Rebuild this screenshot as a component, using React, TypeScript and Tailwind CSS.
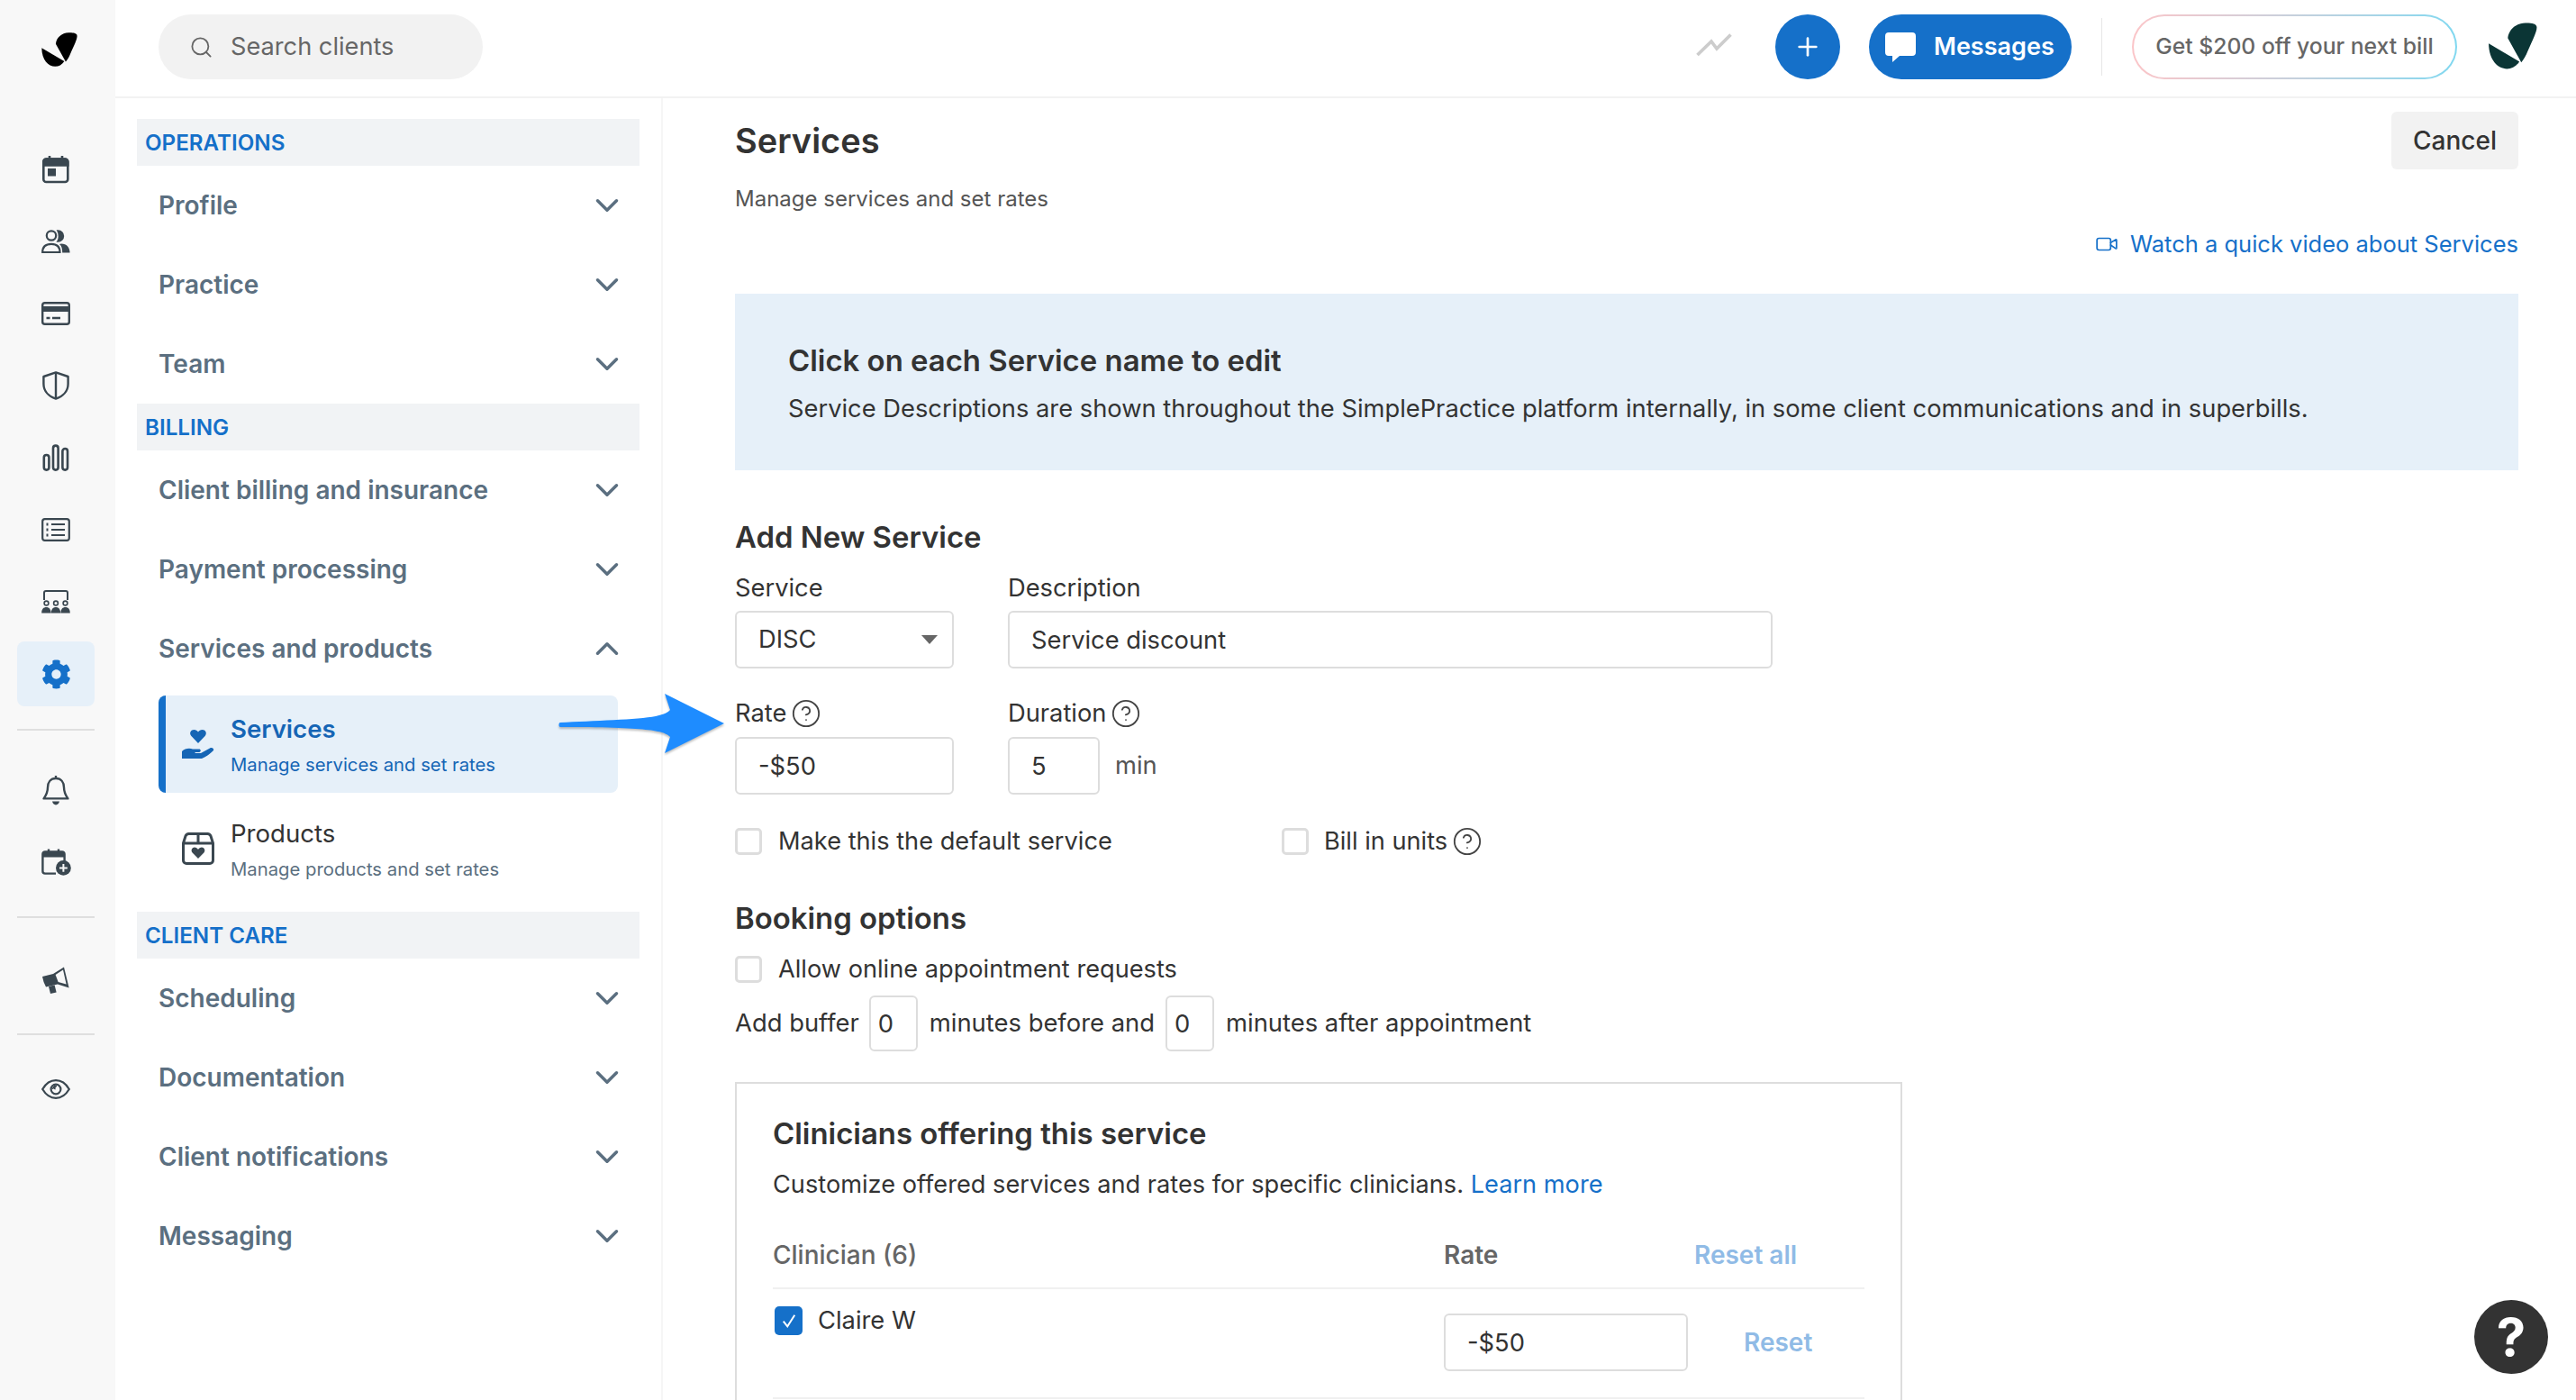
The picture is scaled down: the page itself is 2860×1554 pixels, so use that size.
import { ReactNode } from "react";
import { ChevronDown, ChevronUp, CircleHelp, Plus, Search, Video } from "lucide-react";
import { FaCog } from "react-icons/fa";

const Logo = ({ className }: { className: string }) => (
  <svg viewBox="0 0 42 40" className={className} fill="currentColor">
    <path d="M16.3 13 C17 6 23 .4 31 .3 C36 .2 40.5 .6 40.6 4 C40.6 8 37 15 33 24 C31.5 28 29.5 31 27.6 33.4 Z" />
    <path d="M.3 17.6 L26 32.8 C23.4 36.8 19.6 38.8 15.6 38.8 C7.6 38.8 .4 31 .3 17.6 Z" />
  </svg>
);

// rail icons, drawn by hand so the strokes match
const railIcons: ReactNode[] = [
  <svg key="cal" viewBox="0 0 32 32" className="h-[32px] w-[32px]" fill="none" stroke="#3a4750" strokeWidth="2.6">
    <rect x="2.3" y="4.5" width="27" height="25.5" rx="3" />
    <path d="M2.3 8 a3 3 0 0 1 3-3.5 h21 a3 3 0 0 1 3 3.5 v3.5 h-27 z" fill="#3a4750" />
    <path d="M9 1v4M23 1v4" />
    <rect x="7" y="15" width="9" height="8.5" fill="#3a4750" stroke="none" />
  </svg>,
  <svg key="people" viewBox="0 0 32 26" className="h-[26px] w-[32px]" fill="none" stroke="#3a4750" strokeWidth="2.2">
    <circle cx="11" cy="6.5" r="5.2" />
    <path d="M1.2 25 C1.2 19 5 15.8 11 15.8 C17 15.8 20.5 19 20.5 25 Z" />
    <path d="M18.5 1.4 A5.6 5.6 0 0 1 18.5 12.6 C20.2 10 20.2 4.4 18.5 1.4 Z" fill="#3a4750" />
    <path d="M22 15.4 C28 15.4 31.4 19.4 31.6 25.6 H23.2 C23.2 21.6 22.6 18 20 16 Z" fill="#3a4750" stroke="none" />
  </svg>,
  <svg key="card" viewBox="0 0 32 26" className="h-[26px] w-[32px]" fill="none" stroke="#3a4750" strokeWidth="2.4">
    <rect x="1.2" y="1.2" width="29.6" height="23.6" rx="2.6" />
    <rect x="1.2" y="5" width="29.6" height="6" fill="#3a4750" stroke="none" />
    <path d="M5.5 18h4M12 18h9" />
  </svg>,
  <svg key="shield" viewBox="0 0 30 32" className="h-[32px] w-[30px]" fill="none" stroke="#3a4750" strokeWidth="2.4">
    <path d="M15 1.4 L28.6 6 V14 C28.6 22 23 28 15 30.6 C7 28 1.4 22 1.4 14 V6 Z" strokeLinejoin="round" />
    <path d="M15 1.4V30.6" />
  </svg>,
  <svg key="chart" viewBox="0 0 30 30" className="h-[30px] w-[30px]" fill="none" stroke="#3a4750" strokeWidth="2.6">
    <rect x="1.8" y="12" width="5.6" height="16.6" rx="2.8" />
    <rect x="12" y="1.6" width="5.6" height="27" rx="2.8" />
    <rect x="22.4" y="5" width="5.6" height="23.6" rx="2.8" />
  </svg>,
  <svg key="list" viewBox="0 0 32 26" className="h-[26px] w-[32px]" fill="none" stroke="#3a4750" strokeWidth="2.2">
    <rect x="1.2" y="1.2" width="29.6" height="23.6" rx="2.6" />
    <path d="M11 7h15M11 13h15M11 19h15" />
    <path d="M5.5 7h2M5.5 13h2M5.5 19h2" strokeWidth="2.8" />
  </svg>,
  <svg key="meeting" viewBox="0 0 32 26" className="h-[26px] w-[32px]" fill="none" stroke="#3a4750" strokeWidth="2">
    <path d="M3 11 V3 a2 2 0 0 1 2-2 h22 a2 2 0 0 1 2 2 V11" />
    <circle cx="5.5" cy="14.5" r="2.4" strokeWidth="1.6" />
    <circle cx="16" cy="14.5" r="2.4" strokeWidth="1.6" />
    <circle cx="26.5" cy="14.5" r="2.4" strokeWidth="1.6" />
    <path d="M.2 25.4 C.2 21 2.4 19 5.4 19 C8.4 19 10.4 21 10.6 25.4 Z M10.8 25.4 C11 21 13 19 16 19 C19 19 21 21 21.2 25.4 Z M21.4 25.4 C21.6 21 23.6 19 26.6 19 C29.6 19 31.8 21 31.8 25.4 Z" fill="#3a4750" stroke="none" />
  </svg>,
];

const Bell = () => (
  <svg viewBox="0 0 30 34" className="h-[34px] w-[30px]" fill="none" stroke="#3a4750" strokeWidth="2.4">
    <path d="M15 4 C9 4 6 8.5 6 14 C6 20 4 23 1.6 26.4 H28.4 C26 23 24 20 24 14 C24 8.5 21 4 15 4 Z M15 1v3" strokeLinejoin="round" />
    <path d="M11 29.6 H19 C18.6 32 17 33.4 15 33.4 C13 33.4 11.4 32 11 29.6 Z" fill="#3a4750" stroke="none" />
  </svg>
);

const CalendarPlus = () => (
  <svg viewBox="0 0 33 30" className="h-[30px] w-[33px]" fill="none" stroke="#3a4750" strokeWidth="2.4">
    <path d="M16 27.6 H4 a2.6 2.6 0 0 1-2.6-2.6 V6 a2.6 2.6 0 0 1 2.6-2.6 H23 a2.6 2.6 0 0 1 2.6 2.6 V14" />
    <path d="M1.4 6 a2.6 2.6 0 0 1 2.6-2.6 H23 a2.6 2.6 0 0 1 2.6 2.6 V9.6 H1.4 Z" fill="#3a4750" stroke="none" />
    <path d="M8 .4v4M19 .4v4" />
    <circle cx="24.4" cy="21.4" r="8.4" fill="#3a4750" stroke="none" />
    <path d="M24.4 17v8.8M20 21.4h8.8" stroke="#f8f8f8" strokeWidth="2" />
  </svg>
);

const Megaphone = () => (
  <svg viewBox="0 0 32 33" className="h-[33px] w-[32px]" fill="none" stroke="#3a4750" strokeWidth="2.4">
    <path d="M1 13 L13 10 L25 2.4 L30.6 25.4 L18 21.6 L5 24.6 Q2 19 1 13 Z" fill="#3a4750" stroke="none" />
    <path d="M15.6 11 L24 5.6 L27.6 21.6 L18.6 19 Z" fill="#f8f8f8" stroke="none" />
    <path d="M8 24 L10 32 L16.6 30.6 L14.6 22.4 Z" fill="#3a4750" stroke="none" />
  </svg>
);

const Eye = () => (
  <svg viewBox="0 0 32 22" className="h-[22px] w-[32px]" fill="none" stroke="#3a4750" strokeWidth="2.2">
    <path d="M1.2 11 C5 4.6 10 1.2 16 1.2 C22 1.2 27 4.6 30.8 11 C27 17.4 22 20.8 16 20.8 C10 20.8 5 17.4 1.2 11 Z" />
    <circle cx="16" cy="11" r="5.4" />
    <path d="M16 7.6 A3.4 3.4 0 0 0 12.6 11 A3.4 3.4 0 0 1 16 7.6 Z M13 9 a3 3 0 0 1 4 -1.4 a3 3 0 0 0 -2 3.6 z" fill="#3a4750" stroke="#3a4750" strokeWidth="1" />
  </svg>
);

const RailDivider = () => <div className="h-[2px] w-[86px] bg-[#dfdfdf]" />;

function Rail() {
  return (
    <aside className="flex w-[128px] shrink-0 flex-col items-center bg-[#f8f8f8] pr-[4px]">
      <div className="flex h-[148px] w-full items-start justify-center pt-[36px] pl-[8px]">
        <Logo className="h-[39px] w-[41px] text-black" />
      </div>
      {railIcons.map((icon, i) => (
        <div key={i} className="flex h-[80px] w-full items-center justify-center">
          {icon}
        </div>
      ))}
      <div className="mt-[4px] flex h-[72px] w-[86px] shrink-0 items-center justify-center rounded-[8px] bg-[#e6f0f9] text-[#1570c9]">
        <FaCog className="h-[33px] w-[33px]" />
      </div>
      <div className="mt-[25px]">
        <RailDivider />
      </div>
      <div className="mt-[31px] flex h-[70px] items-center">
        <Bell />
      </div>
      <div className="mt-[10px] flex h-[70px] items-center">
        <CalendarPlus />
      </div>
      <div className="mt-[25px]">
        <RailDivider />
      </div>
      <div className="mt-[50px] flex h-[36px] items-center">
        <Megaphone />
      </div>
      <div className="mt-[42px]">
        <RailDivider />
      </div>
      <div className="mt-[44px] flex h-[32px] items-center">
        <Eye />
      </div>
    </aside>
  );
}

function TopBar() {
  return (
    <header className="flex h-[109px] shrink-0 items-start border-b-2 border-[#f2f2f2] pt-[16px] pl-[48px]">
      <div className="flex h-[72px] w-[360px] items-center rounded-full bg-[#f2f2f2] pl-[34px] text-[#666666]">
        <Search className="h-[27px] w-[27px]" strokeWidth={1.6} />
        <span className="ml-[19px] text-[27.2px]">Search clients</span>
      </div>
      <svg viewBox="0 0 40 26" className="mt-[21px] ml-[1347px] h-[26px] w-[40px]" fill="none" stroke="#cccccc" strokeWidth="3.6">
        <path d="M1.5 24 L17 9 L23 17 L38.5 1.5" />
      </svg>
      <button className="ml-[48px] flex h-[72px] w-[72px] items-center justify-center rounded-full bg-[#1570c9] text-white">
        <Plus className="h-[32px] w-[32px]" strokeWidth={2} />
      </button>
      <button className="ml-[32px] flex h-[72px] w-[225px] items-center rounded-full bg-[#1570c9] pl-[18px] text-white">
        <svg viewBox="0 0 34 33" className="h-[33px] w-[34px]" fill="currentColor">
          <path d="M4 0 H30 a4 4 0 0 1 4 4 V22 a4 4 0 0 1-4 4 H16 L8 33 V26 H4 a4 4 0 0 1-4-4 V4 a4 4 0 0 1 4-4 Z" />
        </svg>
        <span className="ml-[20px] text-[27px] font-semibold">Messages</span>
      </button>
      <div className="mt-[4px] ml-[33px] h-[64px] w-[1px] bg-[#e6e6e6]" />
      <div className="ml-[33px] h-[72px] w-[361px] rounded-full bg-gradient-to-r from-[#fbc5c8] to-[#80d8f0] p-[2px]">
        <div className="flex h-full w-full items-center justify-center rounded-full bg-white text-[24.7px] font-medium text-[#666666]">
          Get $200 off your next bill
        </div>
      </div>
      <Logo className="mt-[9px] ml-[34px] h-[53px] w-[57px] text-[#0b3535]" />
    </header>
  );
}

const SectionHeader = ({ title }: { title: string }) => (
  <div className="flex h-[52px] items-center bg-[#f1f3f5] pt-[2px] pl-[9px] text-[24.2px] font-semibold text-[#1570c9]">
    {title}
  </div>
);

const NavRow = ({ title, open }: { title: string; open?: boolean }) => (
  <div className="flex h-[88px] items-center justify-between pr-[15px] pl-[24px] text-[28px] font-semibold text-[#5b6f80]">
    <span>{title}</span>
    {open ? (
      <ChevronUp className="h-[42px] w-[42px]" strokeWidth={2} />
    ) : (
      <ChevronDown className="h-[42px] w-[42px]" strokeWidth={2} />
    )}
  </div>
);

function Sidebar() {
  return (
    <nav className="w-[608px] shrink-0 border-r-2 border-[#f6f6f6] pt-[23px] pr-[24px] pl-[24px]">
      <div className="w-[558px]">
        <SectionHeader title="OPERATIONS" />
        <NavRow title="Profile" />
        <NavRow title="Practice" />
        <NavRow title="Team" />
        <SectionHeader title="BILLING" />
        <NavRow title="Client billing and insurance" />
        <NavRow title="Payment processing" />
        <NavRow title="Services and products" open />
        <div className="mt-[8px] ml-[24px] flex h-[108px] w-[510px] items-center rounded-[8px] border-l-[8px] border-[#1570c9] bg-[#e6f0f9] pl-[18px] text-[#1565b5]">
          <svg viewBox="0 0 36 32" className="h-[32px] w-[36px] shrink-0" fill="currentColor">
            <path d="M18 15 L10.4 7 C7.6 3.6 10 0 13.4 0 C15.4 0 17 1 18 2.6 C19 1 20.6 0 22.6 0 C26 0 28.4 3.6 25.6 7 Z" />
            <path d="M0 24 C3 21 8 20 12 21.6 H19 C21 21.6 21.6 24.4 19.4 25 H14.6 V26 H21 L31 20.4 C33.6 19 36 21.4 35 23 C31 27 27 30 22 32 H0 Z" />
          </svg>
          <div className="mt-[4px] ml-[18px]">
            <div className="text-[27.6px] leading-[38px] font-semibold">Services</div>
            <div className="mt-[4px] text-[20.3px] leading-[34px]">Manage services and set rates</div>
          </div>
        </div>
        <div className="mt-[8px] ml-[24px] flex h-[108px] w-[510px] items-center border-l-[8px] border-transparent pl-[18px]">
          <svg viewBox="0 0 36 36" className="h-[36px] w-[36px] shrink-0" fill="none" stroke="#3a4750" strokeWidth="3">
            <path d="M1.5 12 L4 4 a4 4 0 0 1 3.6-2.5 H28.4 a4 4 0 0 1 3.6 2.5 L34.5 12 V31 a3.5 3.5 0 0 1-3.5 3.5 H5 a3.5 3.5 0 0 1-3.5-3.5 Z" />
            <path d="M1.5 12 H34.5 M18 1.5 V12" />
            <path d="M18 29 L11.6 22.6 C9.4 19.8 11.4 16.6 14 16.6 C15.6 16.6 17.2 17.6 18 19 C18.8 17.6 20.4 16.6 22 16.6 C24.6 16.6 26.6 19.8 24.4 22.6 Z" fill="#3a4750" stroke="none" />
          </svg>
          <div className="mt-[4px] ml-[18px]">
            <div className="text-[27.6px] leading-[38px] text-[#333333]">Products</div>
            <div className="mt-[4px] text-[20.3px] leading-[34px] text-[#5b6f80]">Manage products and set rates</div>
          </div>
        </div>
        <div className="mt-[16px]">
          <SectionHeader title="CLIENT CARE" />
        </div>
        <NavRow title="Scheduling" />
        <NavRow title="Documentation" />
        <NavRow title="Client notifications" />
        <NavRow title="Messaging" />
      </div>
    </nav>
  );
}

const TextInput = ({ value, className }: { value: string; className: string }) => (
  <input
    readOnly
    value={value}
    className={`h-[64px] rounded-[6px] border-2 border-[#dddddd] bg-white pl-[24px] text-[27.3px] text-[#333333] outline-none ${className}`}
  />
);

const Check = () => <div className="h-[30px] w-[30px] shrink-0 rounded-[5px] border-[3px] border-[#dddddd] bg-white" />;

const Help = () => <CircleHelp className="ml-[5px] h-[34px] w-[34px] text-[#444444]" strokeWidth={1.3} />;

function Form() {
  return (
    <main className="min-w-0 flex-1 pt-[15px] pr-[64px] pl-[80px] text-[#333333]">
      <div className="flex h-[64px] items-center justify-between">
        <h1 className="text-[38px] font-semibold">Services</h1>
        <button className="h-[64px] w-[141px] rounded-[6px] bg-[#f2f2f2] text-[28px] font-medium">Cancel</button>
      </div>
      <p className="mt-[17px] text-[24px] leading-[32px] text-[#555555]">Manage services and set rates</p>
      <div className="mt-[18px] flex items-center justify-end text-[25.5px] leading-[32px] text-[#1570c9]">
        <Video className="mr-[13px] h-[26px] w-[26px]" strokeWidth={1.6} />
        <span>Watch a quick video about Services</span>
      </div>

      <div className="mt-[39px] h-[196px] bg-[#e6f0f9] pt-[52px] pl-[59px]">
        <div className="text-[32.9px] leading-[44px] font-semibold">Click on each Service name to edit</div>
        <div className="mt-[14px] text-[27.3px] leading-[36px]">
          Service Descriptions are shown throughout the SimplePractice platform internally, in some client communications and in superbills.
        </div>
      </div>

      <h2 className="mt-[52px] text-[32.9px] leading-[44px] font-semibold">Add New Service</h2>
      <div className="mt-[19px] flex gap-[60px] text-[27.3px] leading-[32px]">
        <div className="w-[243px]">
          <div>Service</div>
          <div className="mt-[9px] flex h-[64px] items-center justify-between rounded-[6px] border-2 border-[#dddddd] pr-[16px] pl-[24px]">
            <span>DISC</span>
            <svg viewBox="0 0 18 10" className="h-[10px] w-[18px]" fill="#666666">
              <path d="M0 0H18L9 10Z" />
            </svg>
          </div>
        </div>
        <div>
          <div>Description</div>
          <TextInput value="Service discount" className="mt-[9px] w-[849px]" />
        </div>
      </div>
      <div className="mt-[34px] flex gap-[60px] text-[27.3px] leading-[32px]">
        <div className="w-[243px]">
          <div className="flex h-[32px] items-center">
            Rate <Help />
          </div>
          <TextInput value="-$50" className="mt-[10px] w-[243px]" />
        </div>
        <div>
          <div className="flex h-[32px] items-center">
            Duration <Help />
          </div>
          <div className="mt-[10px] flex items-center">
            <TextInput value="5" className="w-[102px]" />
            <span className="ml-[17px] text-[#555555]">min</span>
          </div>
        </div>
      </div>
      <div className="mt-[37px] flex h-[30px] items-center text-[27.2px]">
        <Check />
        <span className="ml-[18px] w-[559px]">Make this the default service</span>
        <Check />
        <span className="ml-[17px]">Bill in units</span>
        <Help />
      </div>
      <h2 className="mt-[48px] text-[32.9px] leading-[44px] font-semibold">Booking options</h2>
      <div className="mt-[20px] flex h-[30px] items-center text-[27.2px]">
        <Check />
        <span className="ml-[18px]">Allow online appointment requests</span>
      </div>
      <div className="mt-[14px] flex h-[62px] items-center text-[27.4px]">
        <span>Add buffer</span>
        <input readOnly value="0" className="ml-[11px] h-[62px] w-[54px] rounded-[6px] border-2 border-[#dddddd] pl-[8px] outline-none" />
        <span className="ml-[13px]">minutes before and</span>
        <input readOnly value="0" className="ml-[12px] h-[62px] w-[54px] rounded-[6px] border-2 border-[#dddddd] pl-[8px] outline-none" />
        <span className="ml-[13px]">minutes after appointment</span>
      </div>

      <section className="mt-[34px] h-[400px] w-[1296px] border-2 border-[#dddddd] pt-[33px] pr-[40px] pl-[40px]">
        <h3 className="text-[32.9px] leading-[44px] font-semibold">Clinicians offering this service</h3>
        <p className="mt-[17px] text-[27.2px] leading-[36px]">
          Customize offered services and rates for specific clinicians. <span className="text-[#1570c9]">Learn more</span>
        </p>
        <div className="mt-[40px] grid grid-cols-[745px_278px_1fr] border-b-2 border-[#f0f0f0] pb-[16px] text-[28px] leading-[40px] font-medium text-[#666666]">
          <span>Clinician (6)</span>
          <span className="font-semibold">Rate</span>
          <span className="font-semibold text-[#90bbe6]">Reset all</span>
        </div>
        <div className="grid h-[122px] grid-cols-[745px_333px_1fr] border-b-2 border-[#f0f0f0] text-[27.3px]">
          <div className="flex items-start pt-[19px] pl-[2px]">
            <div className="flex h-[32px] w-[31px] items-center justify-center rounded-[5px] bg-[#1570c9]">
              <svg viewBox="0 0 16 16" className="h-[20px] w-[20px]" fill="none" stroke="white" strokeWidth="1.6">
                <path d="M3 8.5 L6.6 13 L13 3" />
              </svg>
            </div>
            <span className="ml-[17px] leading-[32px]">Claire W</span>
          </div>
          <div className="pt-[27px]">
            <TextInput value="-$50" className="w-[271px]" />
          </div>
          <div className="flex items-start pt-[27px]">
            <span className="text-[28px] leading-[64px] font-semibold text-[#90bbe6]">Reset</span>
          </div>
        </div>
      </section>
    </main>
  );
}

export default function App() {
  return (
    <div className="relative flex h-[1554px] w-[2860px] overflow-hidden bg-white font-['Inter',sans-serif]">
      <Rail />
      <div className="flex min-w-0 flex-1 flex-col">
        <TopBar />
        <div className="flex min-h-0 flex-1">
          <Sidebar />
          <Form />
        </div>
      </div>
      {/* the annotation arrow sits over the page */}
      <svg viewBox="0 0 190 70" className="absolute top-[769px] left-[618px] h-[70px] w-[190px] drop-shadow-[0_2px_1px_rgba(0,0,0,0.25)]">
        <path d="M4 33 C40 31 90 30 110 26 C118 24 124 22 126 19 L120 1 L186 34 L120 67 L126 49 C120 42 100 38 4 38 C2 38 2 33 4 33 Z" fill="#1e8cff" />
      </svg>
      <div className="absolute top-[1443px] left-[2747px] flex h-[82px] w-[82px] items-center justify-center rounded-full bg-[#333333] text-[58px] font-bold text-white">
        ?
      </div>
    </div>
  );
}
